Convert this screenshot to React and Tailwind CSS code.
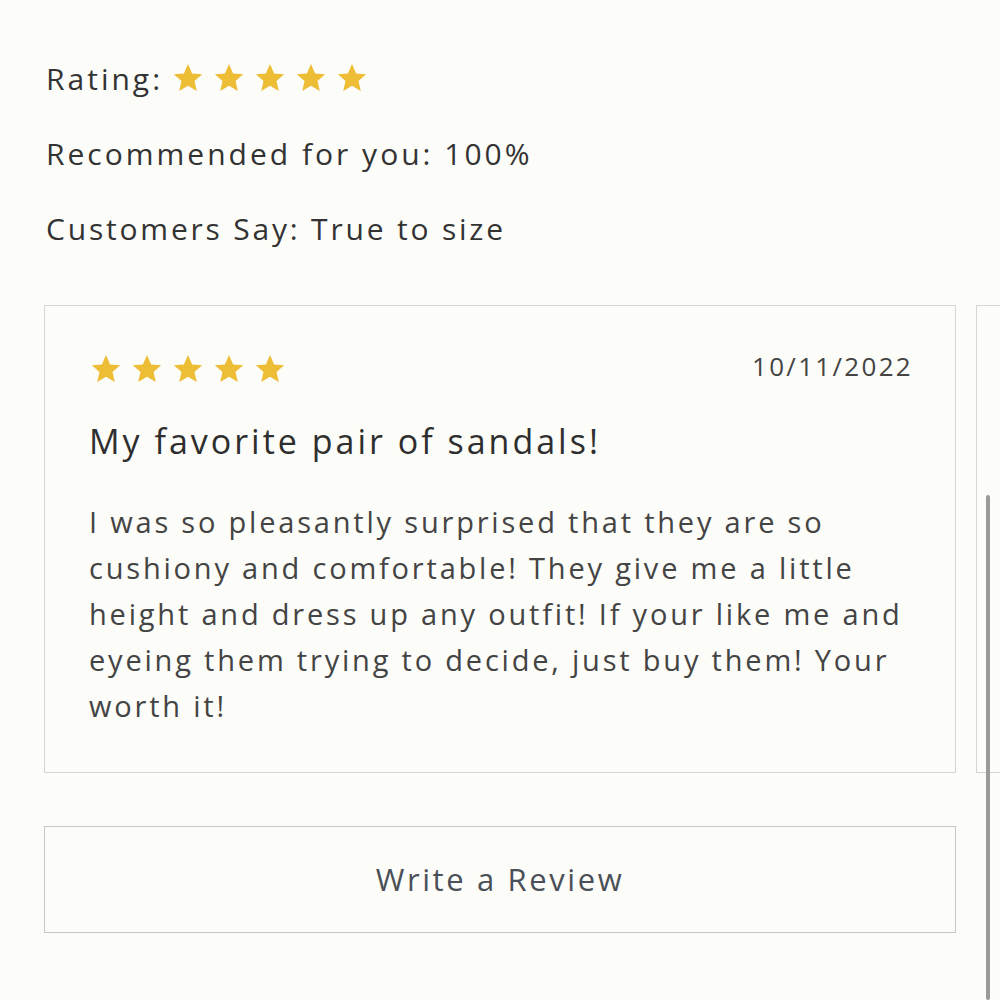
import React from 'react';

const FONT = { fontFamily: '"Open Sans", Lato, sans-serif' };

function Star({ size = 32 }) {
    return (
        <svg width={size} height={size} viewBox="0 0 24 24" className="shrink-0">
            <path
                d="M12 2.2l2.9 6.6 7.1.6-5.4 4.7 1.6 7-6.2-3.7-6.2 3.7 1.6-7L2 9.4l7.1-.6z"
                fill="#eebd36"
            />
        </svg>
    );
}

function Stars({ size, gap }) {
    return (
        <span className={`flex items-center ${gap}`}>
            {[0, 1, 2, 3, 4].map((i) => (
                <Star key={i} size={size} />
            ))}
        </span>
    );
}

export default function App() {
    return (
        <div className="relative h-[1000px] w-[1000px] overflow-hidden bg-[#fcfcf9] text-[#333]" style={FONT}>
            <div className="pl-[46px] pt-[56px]">
                <div className="flex h-[44px] items-center gap-[8px] text-[30px] tracking-[3px]">
                    <span>Rating:</span>
                    <Stars size={34} gap="gap-[7px]" />
                </div>
                <div className="mt-[31px] flex h-[44px] items-center text-[30px] tracking-[3px]">
                    Recommended for you: 100%
                </div>
                <div className="mt-[31px] flex h-[44px] items-center text-[30px] tracking-[2.8px]">
                    Customers Say: True to size
                </div>
            </div>

            <div className="mt-[55px] flex gap-[20px] pl-[44px]">
                <div className="h-[468px] w-[912px] shrink-0 border border-[#d6d6d4] px-[44px] pt-[43px]">
                    <div className="flex items-center justify-between">
                        <Stars size={34} gap="gap-[7px]" />
                        <span className="mr-[-2px] -translate-y-[2px] text-[26px] tracking-[2.3px] text-[#444]">10/11/2022</span>
                    </div>
                    <div className="mt-[28px] text-[34px] tracking-[3px] text-[#2e2e2e]">
                        My favorite pair of sandals!
                    </div>
                    <p className="mt-[32px] text-[29px] leading-[46px] tracking-[2.8px] text-[#444]">
                        I was so pleasantly surprised that they are so cushiony and comfortable! They give me a little
                        height and dress up any outfit! If your like me and eyeing them trying to decide, just buy them!
                        Your worth it!
                    </p>
                </div>
                <div className="h-[468px] w-[300px] shrink-0 border border-[#d6d6d4]" />
            </div>

            <div className="absolute left-[986px] top-[495px] h-[505px] w-[4px] rounded-full bg-[#9a9a9a]" />

            <div className="ml-[44px] mt-[53px] flex h-[107px] w-[912px] items-center justify-center border border-[#c8c8c6] text-[31px] tracking-[2.6px] text-[#4b5058]">
                Write a Review
            </div>
        </div>
    );
}
